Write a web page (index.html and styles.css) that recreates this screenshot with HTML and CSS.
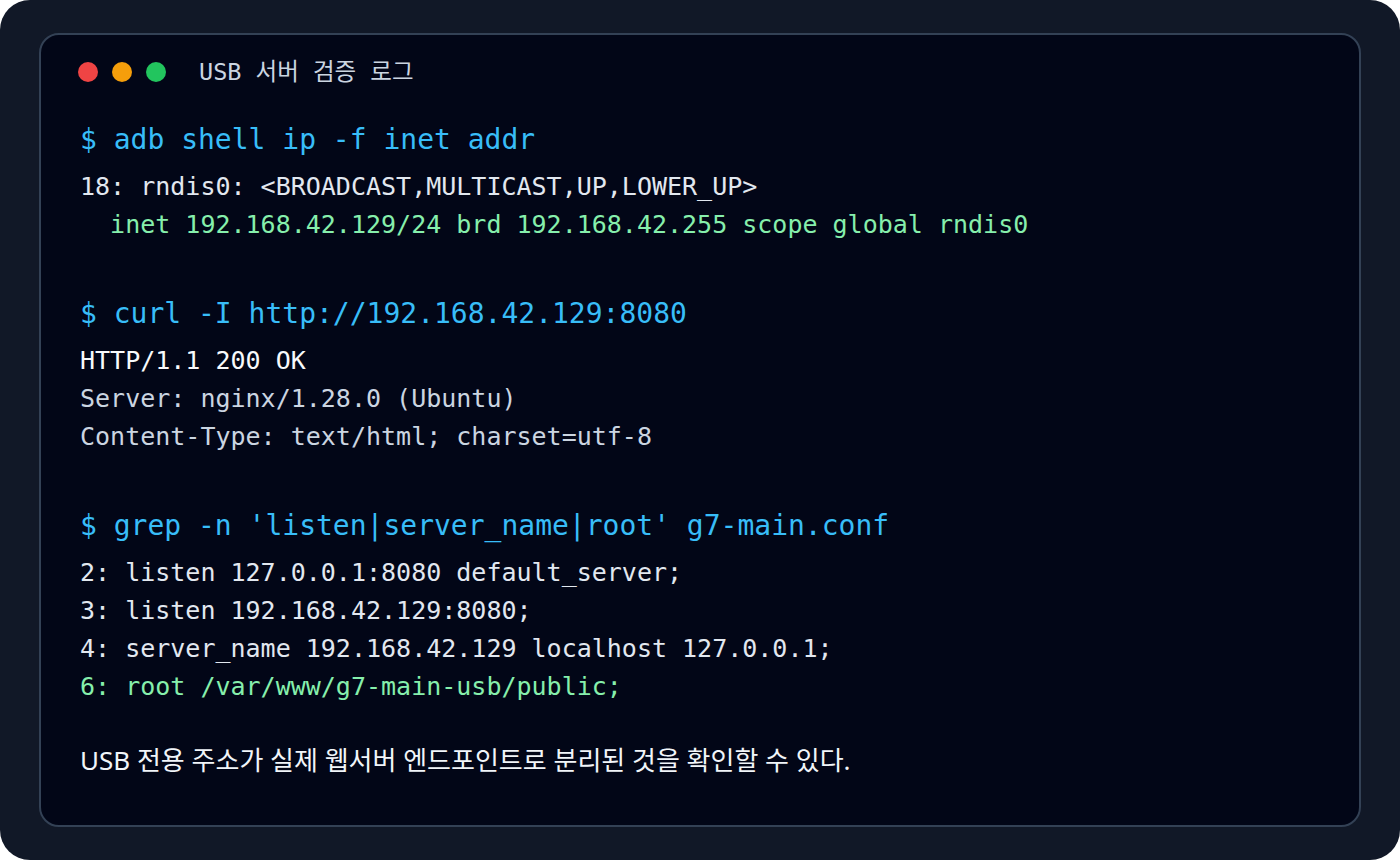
FILE: index.html
```html
<!DOCTYPE html>
<html lang="ko">
<head>
<meta charset="utf-8">
<title>USB 서버 검증 로그</title>
<link rel="stylesheet" href="styles.css">
</head>
<body>
<div class="frame">
  <div class="terminal">
    <div class="header">
      <div class="dots">
        <span class="dot red"></span>
        <span class="dot amber"></span>
        <span class="dot green"></span>
      </div>
      <div class="title">USB 서버 검증 로그</div>
    </div>
    <div class="body">
      <div class="block">
        <div class="cmd">$ adb shell ip -f inet addr</div>
        <div class="out text">18: rndis0: &lt;BROADCAST,MULTICAST,UP,LOWER_UP&gt;</div>
        <div class="out ok">  inet 192.168.42.129/24 brd 192.168.42.255 scope global rndis0</div>
      </div>
      <div class="block">
        <div class="cmd">$ curl -I http://192.168.42.129:8080</div>
        <div class="out bright">HTTP/1.1 200 OK</div>
        <div class="out dim">Server: nginx/1.28.0 (Ubuntu)</div>
        <div class="out dim">Content-Type: text/html; charset=utf-8</div>
      </div>
      <div class="block">
        <div class="cmd">$ grep -n 'listen|server_name|root' g7-main.conf</div>
        <div class="out text">2: listen 127.0.0.1:8080 default_server;</div>
        <div class="out text">3: listen 192.168.42.129:8080;</div>
        <div class="out text">4: server_name 192.168.42.129 localhost 127.0.0.1;</div>
        <div class="out ok">6: root /var/www/g7-main-usb/public;</div>
      </div>
      <p class="note">USB 전용 주소가 실제 웹서버 엔드포인트로 분리된 것을 확인할 수 있다.</p>
    </div>
  </div>
</div>
</body>
</html>
```

FILE: styles.css
```css
html, body {
  margin: 0;
  padding: 0;
  background: #ffffff;
}

.frame {
  width: 1400px;
  height: 860px;
  box-sizing: border-box;
  padding: 33px 39px;
  background: #111827;
  border-radius: 30px;
}

.terminal {
  height: 100%;
  box-sizing: border-box;
  background: #020617;
  border: 2px solid #334155;
  border-radius: 20px;
  padding: 27px 37px 0;
  display: flex;
  flex-direction: column;
}

.header {
  display: flex;
  align-items: center;
  height: 20px;
}

.dots {
  display: flex;
  gap: 14px;
}

.dot {
  width: 20px;
  height: 20px;
  border-radius: 50%;
  display: block;
}

.red { background: #ef4444; }
.amber { background: #f59e0b; }
.green { background: #22c55e; }

.title {
  margin-left: 33px;
  font-family: "DejaVu Sans Mono", "Noto Sans CJK KR", monospace;
  font-size: 23.5px;
  line-height: 24px;
  color: #cbd5e1;
  white-space: pre;
}

.body {
  margin-top: 38px;
  padding-left: 2px;
  display: flex;
  flex-direction: column;
  gap: 50px;
}

.block {
  display: flex;
  flex-direction: column;
}

.cmd {
  font-family: "DejaVu Sans Mono", monospace;
  font-size: 28px;
  line-height: 40px;
  color: #38bdf8;
  white-space: pre;
  margin-bottom: 8px;
}

.out {
  font-family: "DejaVu Sans Mono", monospace;
  font-size: 25px;
  line-height: 38px;
  white-space: pre;
}

.text { color: #e2e8f0; }
.bright { color: #f8fafc; }
.dim { color: #cbd5e1; }
.ok { color: #86efac; }

.note {
  margin: -12px 0 0;
  font-family: "Noto Sans", "Noto Sans CJK KR", sans-serif;
  font-size: 26px;
  line-height: 32px;
  color: #f1f5f9;
}
```
